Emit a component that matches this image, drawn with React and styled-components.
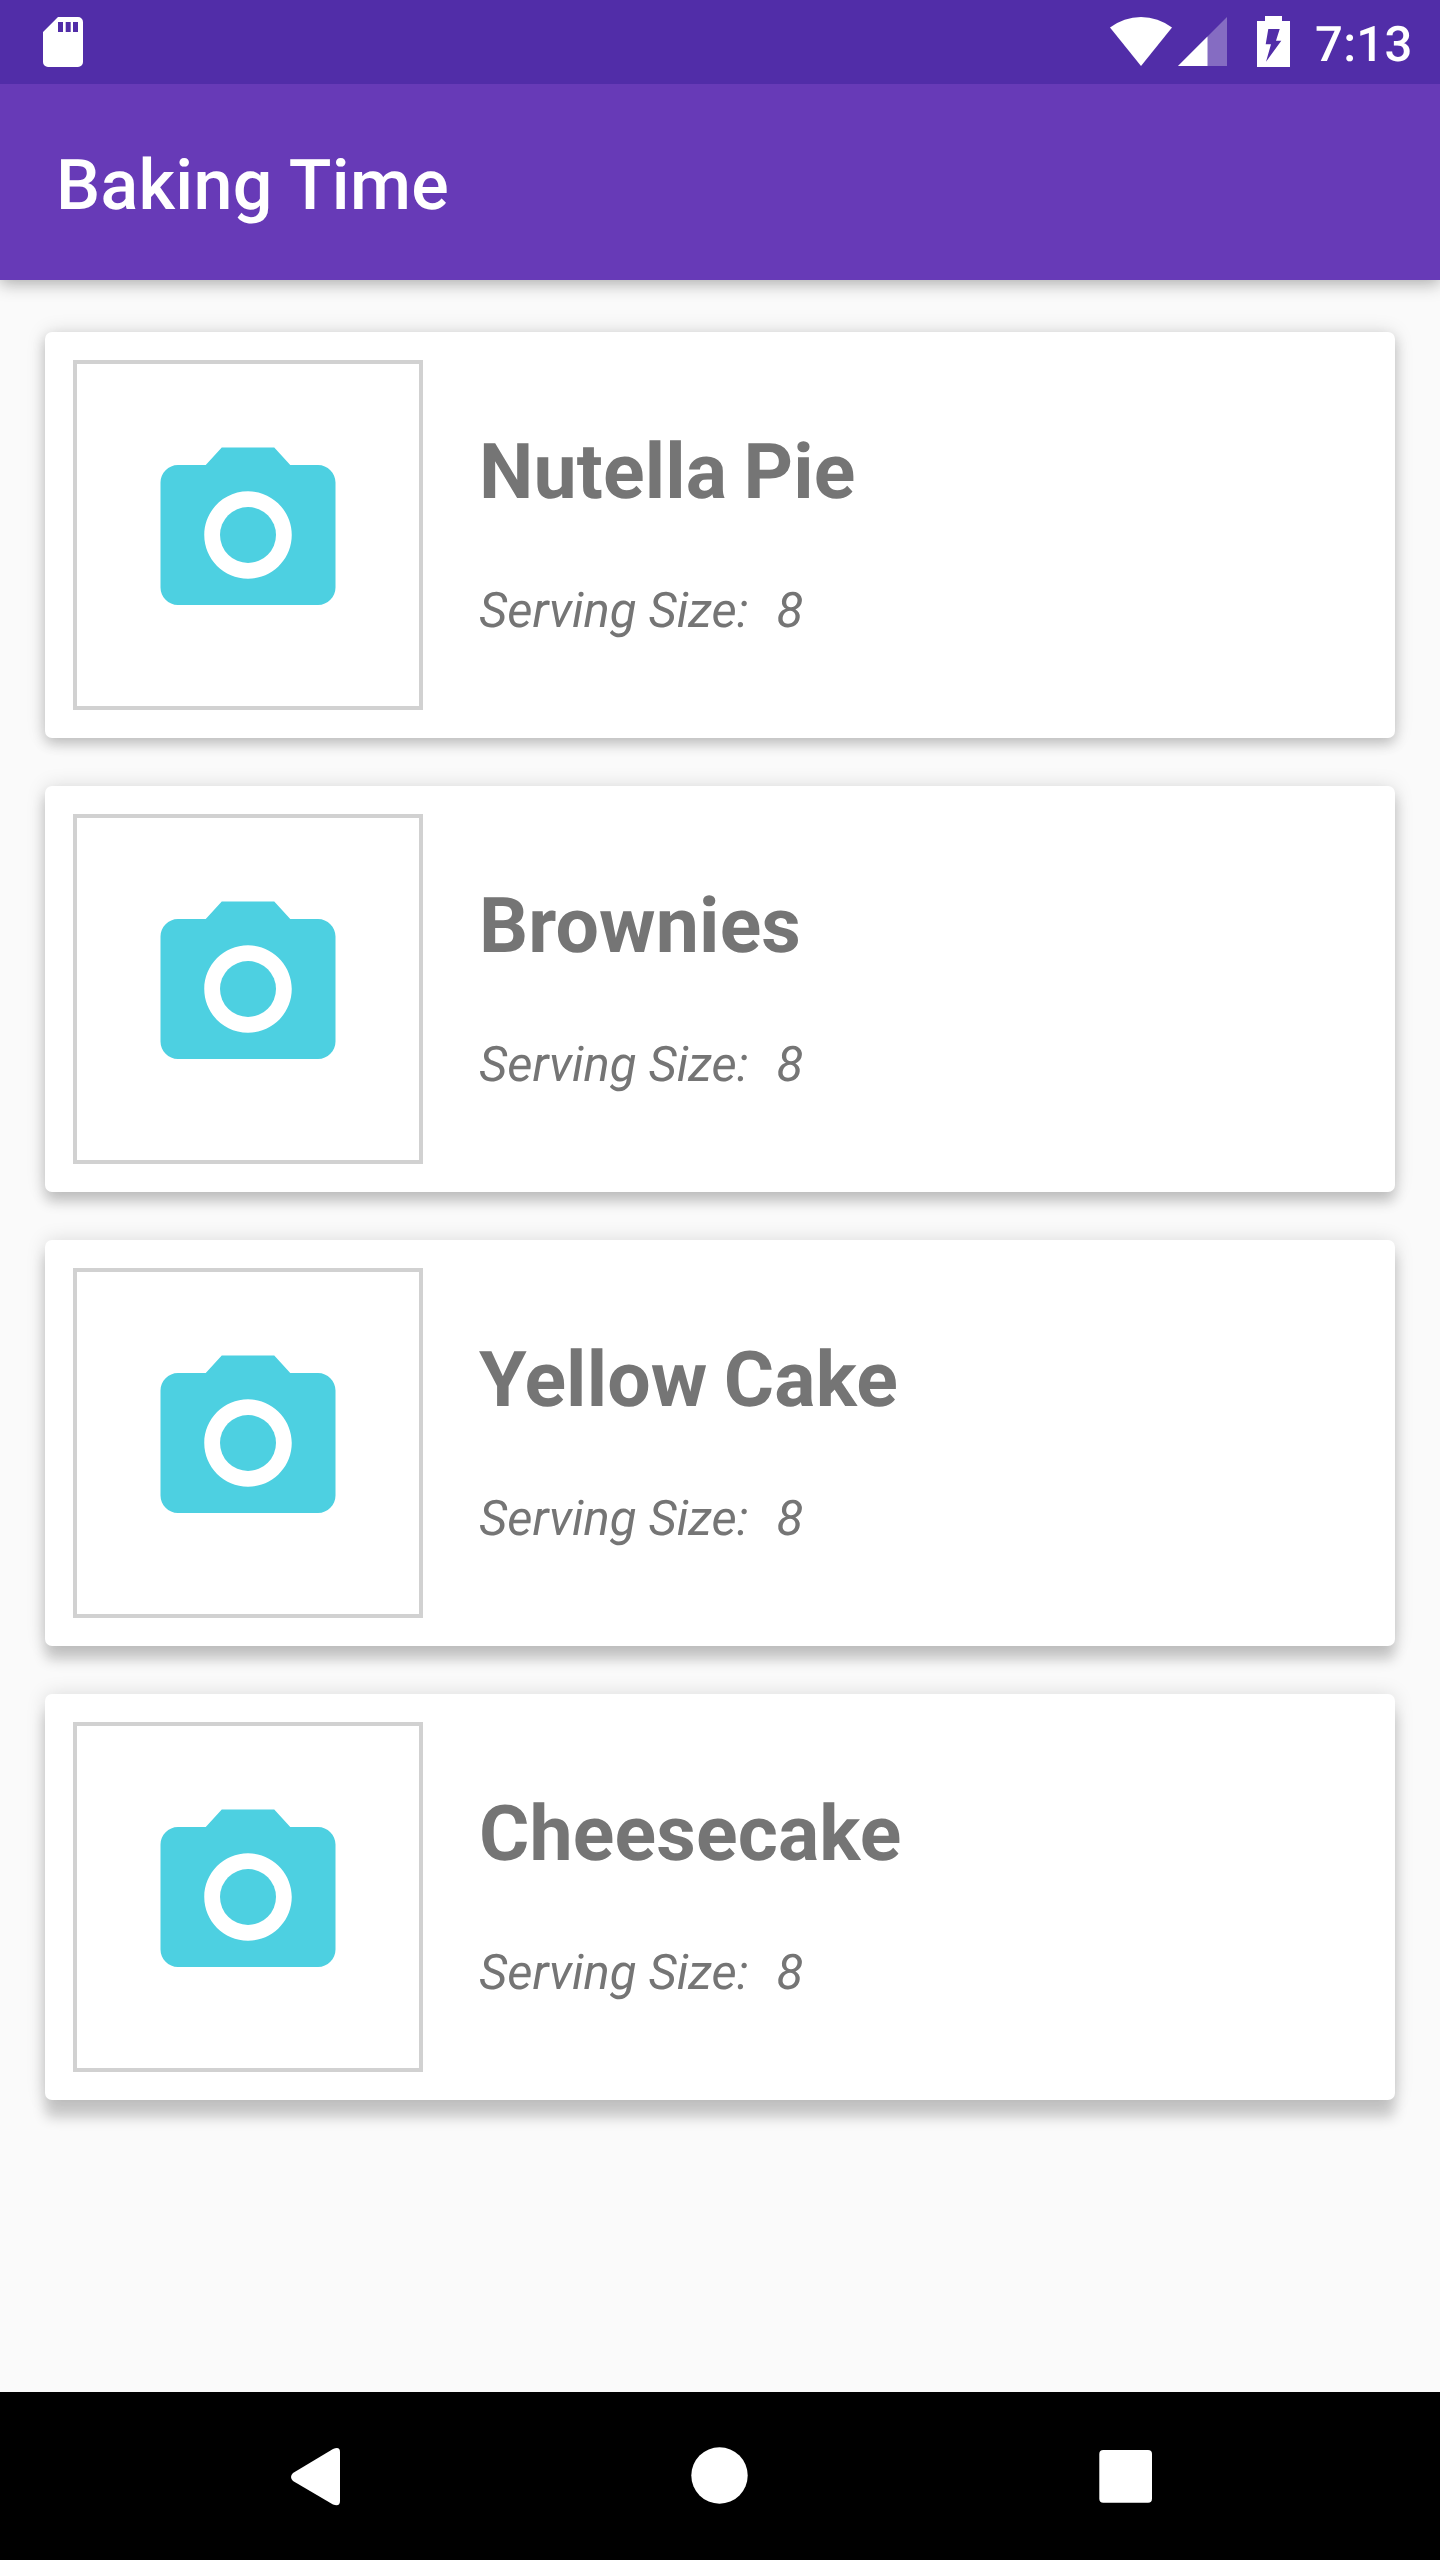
import React from "react";
import styled, { createGlobalStyle } from "styled-components";

const GlobalStyle = createGlobalStyle`
  * { box-sizing: border-box; }
  body {
    margin: 0;
    background: #fafafa;
    font-family: Roboto, sans-serif;
    text-rendering: geometricPrecision;
  }
`;

const Screen = styled.div`
  width: 1440px;
  height: 2560px;
  display: flex;
  flex-direction: column;
  background: #fafafa;
  overflow: hidden;
`;

const StatusBar = styled.header`
  flex: none;
  height: 84px;
  padding: 0 28px 0 28px;
  display: flex;
  align-items: center;
  justify-content: space-between;
  background: #512da8;
  color: #fff;
`;

const StatusIcons = styled.div`
  display: flex;
  align-items: flex-start;
  height: 84px;
`;

const StatusGlyph = styled.svg`
  display: block;
  flex: none;
  fill: #fff;
  margin-right: ${(p) => p.$gap || 0}px;
`;

const Clock = styled.span`
  width: 97px;
  margin-top: 16px;
  font-size: 49px;
  font-weight: 500;
  line-height: 57px;
  letter-spacing: 0.3px;
  white-space: nowrap;
`;

const AppBar = styled.div`
  flex: none;
  height: 196px;
  padding: 8px 56px 0;
  display: flex;
  align-items: center;
  background: #673ab7;
  color: #fff;
  box-shadow: 0 5px 16px rgba(0, 0, 0, 0.24), 0 0 14px rgba(0, 0, 0, 0.1);
  clip-path: inset(0 0 -32px 0);
`;

const AppTitle = styled.h1`
  margin: 0;
  font-size: 70px;
  font-weight: 500;
  line-height: 82px;
  letter-spacing: 0.3px;
`;

const RecipeList = styled.main`
  flex: 1;
  padding: 52px 45px 0;
  display: flex;
  flex-direction: column;
  gap: 48px;
`;

const Card = styled.article`
  flex: none;
  height: 406px;
  padding: 28px;
  display: flex;
  gap: 56px;
  background: #fff;
  border-radius: 7px;
  box-shadow: 0 ${(p) => p.$lift}px 13px rgba(0, 0, 0, 0.19),
    0 0 19px rgba(0, 0, 0, 0.13);
`;

const Thumbnail = styled.div`
  flex: none;
  width: 350px;
  height: 350px;
  border: 4px solid #d1d1d1;
  display: flex;
  align-items: center;
  justify-content: center;
`;

const Details = styled.div`
  display: flex;
  flex-direction: column;
  padding-top: 67px;
  color: #757575;
`;

const RecipeName = styled.h2`
  margin: 0;
  font-size: 77px;
  font-weight: 700;
  line-height: 90px;
  letter-spacing: 0.15px;
  word-spacing: -3px;
`;

const Serving = styled.p`
  margin: 65px 0 0;
  display: flex;
  gap: 28px;
  font-size: 49px;
  font-style: italic;
  line-height: 58px;
`;

const NavBar = styled.nav`
  flex: none;
  height: 168px;
  padding: 0 203px;
  display: flex;
  align-items: center;
  justify-content: space-between;
  background: #000;
`;

const NavGlyph = styled.svg`
  display: block;
  fill: #fff;
`;

const CameraIcon = () => (
  <svg width="210" height="210" viewBox="0 0 24 24" fill="#4dd0e1">
    <circle cx="12" cy="12" r="3.2" />
    <path d="M9 2L7.17 4H4c-1.1 0-2 .9-2 2v12c0 1.1.9 2 2 2h16c1.1 0 2-.9 2-2V6c0-1.1-.9-2-2-2h-3.17L15 2H9zm3 15c-2.76 0-5-2.24-5-5s2.24-5 5-5 5 2.24 5 5-2.24 5-5 5z" />
  </svg>
);

const recipes = [
  { name: "Nutella Pie", servings: 8, lift: 6 },
  { name: "Brownies", servings: 8, lift: 10 },
  { name: "Yellow Cake", servings: 8, lift: 14 },
  { name: "Cheesecake", servings: 8, lift: 18 },
];

export default function App() {
  return (
    <Screen>
      <GlobalStyle />
      <StatusBar>
        <StatusGlyph width="70" height="84" viewBox="0 0 70 84">
          <path
            fillRule="evenodd"
            d="M30 17H50a5 5 0 0 1 5 5V62a5 5 0 0 1-5 5H20a5 5 0 0 1-5-5V32zM30 22v10h5V22zm7.700 0v10h5V22zm7.300 0v10h5V22z"
          />
        </StatusGlyph>
        <StatusIcons>
          <StatusGlyph width="62" height="84" viewBox="0 0 62 84" $gap={6}>
            <path d="M0 27.500A51 51 0 0 1 62 27.500L31 66z" />
          </StatusGlyph>
          <StatusGlyph width="49" height="84" viewBox="0 0 49 84" $gap={30}>
            <path d="M0 66L49 17V66z" opacity="0.3" />
            <path d="M0 66L29.500 36.500V66z" />
          </StatusGlyph>
          <StatusGlyph width="33" height="84" viewBox="0 0 33 84" $gap={25}>
            <path
              fillRule="evenodd"
              d="M8 16H25V21H33V67H0V21H8zM11.300 29L8.700 44.300H14L9 61.700 24.300 40.700H19L22.700 29z"
            />
          </StatusGlyph>
          <Clock>7:13</Clock>
        </StatusIcons>
      </StatusBar>
      <AppBar>
        <AppTitle>Baking Time</AppTitle>
      </AppBar>
      <RecipeList>
        {recipes.map((r) => (
          <Card key={r.name} $lift={r.lift}>
            <Thumbnail>
              <CameraIcon />
            </Thumbnail>
            <Details>
              <RecipeName>{r.name}</RecipeName>
              <Serving>
                <span>Serving Size:</span>
                <span>{r.servings}</span>
              </Serving>
            </Details>
          </Card>
        ))}
      </RecipeList>
      <NavBar>
        <NavGlyph width="224" height="168" viewBox="0 0 224 168">
          <path d="M90 81L130 57Q137 54 137 60V109Q137 115 130 112.500L90 89Q86 85 90 81z" />
        </NavGlyph>
        <NavGlyph width="224" height="168" viewBox="0 0 224 168">
          <circle cx="111.500" cy="83.500" r="28.200" />
        </NavGlyph>
        <NavGlyph width="224" height="168" viewBox="0 0 224 168">
          <rect x="86.300" y="58" width="52.700" height="52.700" rx="4" />
        </NavGlyph>
      </NavBar>
    </Screen>
  );
}
